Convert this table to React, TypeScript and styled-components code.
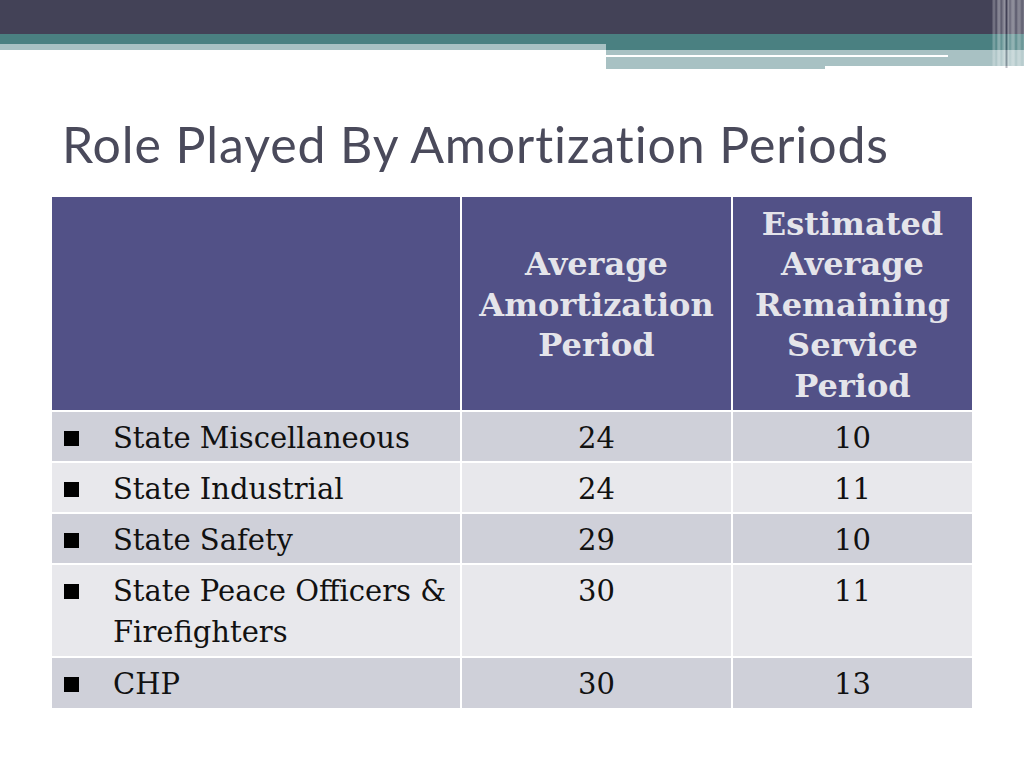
import React from "react";
import styled, { createGlobalStyle } from "styled-components";

type Row = {
  label: string[];
  amort: string;
  remaining: string;
};

const rows: Row[] = [
  { label: ["State Miscellaneous"], amort: "24", remaining: "10" },
  { label: ["State Industrial"], amort: "24", remaining: "11" },
  { label: ["State Safety"], amort: "29", remaining: "10" },
  {
    label: ["State Peace Officers &", "Firefighters"],
    amort: "30",
    remaining: "11",
  },
  { label: ["CHP"], amort: "30", remaining: "13" },
];

const GlobalStyle = createGlobalStyle`
  html, body {
    margin: 0;
    padding: 0;
    background: #ffffff;
  }
  body {
    width: 1024px;
    height: 768px;
    overflow: hidden;
  }
`;

const Slide = styled.div`
  width: 1024px;
  height: 768px;
  background: #ffffff;
  display: flex;
  flex-direction: column;
`;

/* top decoration */
const Banner = styled.div`
  position: relative;
  height: 70px;
  display: flex;
  flex-direction: column;
`;

const DarkBar = styled.div`
  height: 34px;
  background: #434257;
`;

const BandRow = styled.div`
  display: flex;
`;

const LeftBand = styled.div`
  width: 606px;
  display: flex;
  flex-direction: column;
`;

const RightBand = styled.div`
  flex: 1;
  display: flex;
  flex-direction: column;
`;

const Teal = styled.div<{ $h: number }>`
  height: ${(p) => p.$h}px;
  background: #4a8081;
`;

const Light = styled.div<{ $h: number; $w?: number }>`
  height: ${(p) => p.$h}px;
  width: ${(p) => (p.$w ? `${p.$w}px` : "auto")};
  background: #a8c1c3;
`;

const LightBlock = styled.div`
  height: 16px;
  background: #a8c1c3;
  padding-top: 5px;
  box-sizing: border-box;
`;

const WhiteLine = styled.div`
  width: 342px;
  height: 2px;
  background: #ffffff;
`;

const Stripes = styled.div`
  position: absolute;
  top: 0;
  right: 0;
  width: 32px;
  height: 68px;
  background: linear-gradient(
    to right,
    rgba(255, 255, 255, 0) 0px,
    rgba(255, 255, 255, 0.25) 1px,
    rgba(255, 255, 255, 0.25) 3px,
    rgba(255, 255, 255, 0) 4px,
    rgba(255, 255, 255, 0.35) 6px,
    rgba(255, 255, 255, 0.35) 8px,
    rgba(255, 255, 255, 0.1) 9px,
    rgba(255, 255, 255, 0.3) 11px,
    rgba(255, 255, 255, 0.45) 13px,
    rgba(60, 60, 80, 0.35) 14px,
    rgba(60, 60, 80, 0.35) 15px,
    rgba(255, 255, 255, 0.45) 16px,
    rgba(255, 255, 255, 0.2) 18px,
    rgba(255, 255, 255, 0.4) 20px,
    rgba(255, 255, 255, 0.4) 22px,
    rgba(255, 255, 255, 0.1) 24px,
    rgba(255, 255, 255, 0.35) 26px,
    rgba(255, 255, 255, 0.35) 28px,
    rgba(255, 255, 255, 0.15) 30px,
    rgba(255, 255, 255, 0.3) 32px
  );
`;

const Title = styled.h1`
  margin: 44px 0 0 62px;
  font-family: Lato, "Open Sans", sans-serif;
  font-weight: 400;
  font-size: 50px;
  line-height: 60px;
  color: #4a4a5b;
  font-variant-ligatures: none;
  letter-spacing: 0.9px;
`;

/* table */
const Table = styled.div`
  margin: 23px 0 0 52px;
  width: 920px;
  display: grid;
  grid-template-columns: 408px 269px 239px;
  grid-template-rows: 213px 49px 49px 49px 91px 50px;
  gap: 2px;
  background: #ffffff;
  font-family: "DejaVu Serif", "Liberation Serif", serif;
`;

const HeadCell = styled.div`
  background: #525187;
  color: #e4e4ea;
  font-weight: 700;
  font-size: 32px;
  line-height: 40.5px;
  padding-top: 3px;
  box-sizing: border-box;
  display: flex;
  flex-direction: column;
  align-items: center;
  justify-content: center;
  text-align: center;
`;

const BodyCell = styled.div<{ $odd: boolean; $center?: boolean }>`
  background: ${(p) => (p.$odd ? "#cfd0d9" : "#e8e8ec")};
  color: #111111;
  font-size: 29px;
  line-height: 41px;
  padding-top: 6px;
  box-sizing: border-box;
  display: flex;
  align-items: flex-start;
  justify-content: ${(p) => (p.$center ? "center" : "flex-start")};
  padding-left: ${(p) => (p.$center ? "0" : "12px")};
`;

const Bullet = styled.span`
  flex: none;
  width: 15px;
  height: 15px;
  margin-top: 13px;
  background: #000000;
`;

const Label = styled.div`
  margin-left: 34px;
  display: flex;
  flex-direction: column;
`;

export default function App() {
  return (
    <>
      <GlobalStyle />
      <Slide>
        <Banner>
          <DarkBar />
          <BandRow>
            <LeftBand>
              <Teal $h={10} />
              <Light $h={6} />
            </LeftBand>
            <RightBand>
              <Teal $h={16} />
              <LightBlock>
                <WhiteLine />
              </LightBlock>
              <Light $h={3} $w={219} />
            </RightBand>
          </BandRow>
          <Stripes />
        </Banner>

        <Title>Role Played By Amortization Periods</Title>

        <Table>
          <HeadCell />
          <HeadCell>
            <span>Average</span>
            <span>Amortization</span>
            <span>Period</span>
          </HeadCell>
          <HeadCell>
            <span>Estimated</span>
            <span>Average</span>
            <span>Remaining</span>
            <span>Service</span>
            <span>Period</span>
          </HeadCell>
          {rows.map((r, i) => (
            <React.Fragment key={r.label[0]}>
              <BodyCell $odd={i % 2 === 0}>
                <Bullet />
                <Label>
                  {r.label.map((l) => (
                    <span key={l}>{l}</span>
                  ))}
                </Label>
              </BodyCell>
              <BodyCell $odd={i % 2 === 0} $center>
                {r.amort}
              </BodyCell>
              <BodyCell $odd={i % 2 === 0} $center>
                {r.remaining}
              </BodyCell>
            </React.Fragment>
          ))}
        </Table>
      </Slide>
    </>
  );
}
